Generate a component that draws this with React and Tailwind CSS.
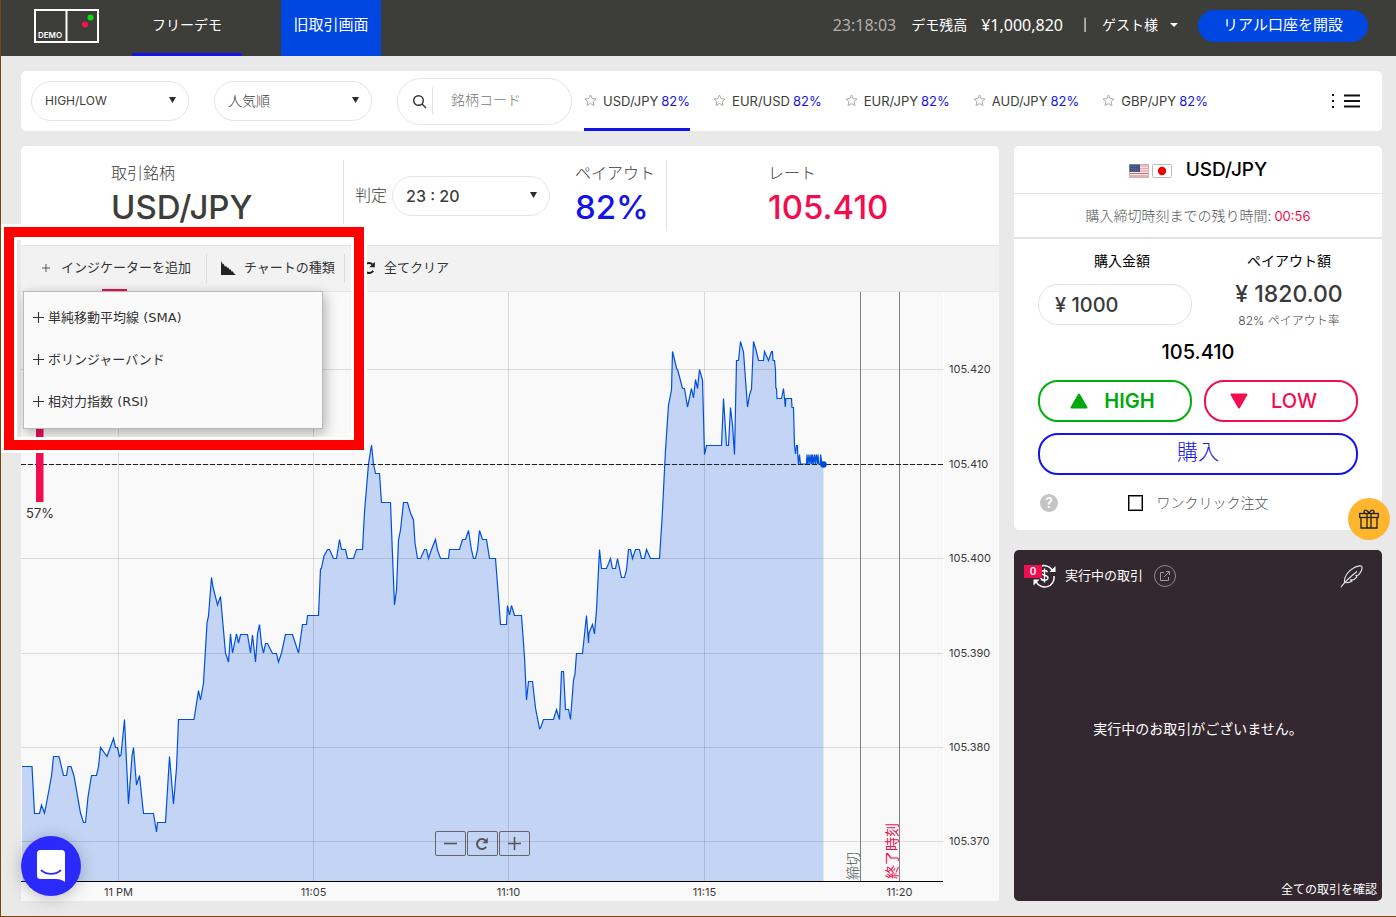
import { useState } from 'react';

const PRICE_POINTS =
  '22,766.5 32,766.5 34.5,813.5 39.5,813.5 41.5,805 44.5,813 46,806 51.5,776 53.5,756.5 59,756.5 63.5,775.5 66.5,775.5 68,766.5 71,766.5 74,776 80.5,813 83.5,822.5 85.5,822.5 88,797 91.5,775.5 96.5,775.5 98.5,767 100.5,747.5 107,756.5 113.5,738.5 115.5,747.5 117.5,747.5 119.5,756.5 121,755 124.5,719.5 128.5,804 132,756 133.5,747.5 136.5,785 139.5,775.5 143.5,813.5 153.5,813.5 156.5,832 157.5,822.5 165.5,822.5 169.5,756.5 173.5,804 176.5,768 178.5,719.5 194,719.5 198.5,690.5 200.5,700 203.5,683 207,623 208.5,616 211.5,577.5 213,587 217.5,605 220.5,596.5 225.5,653 228.5,662 230.5,634 232.5,653 236.5,634 238.5,643 240.5,634.5 247.5,634.5 250.5,653 252.5,635 255.5,662 257.5,634 259.5,624.5 261.5,644 263.5,653 265.5,643.5 267.5,643.5 272.5,653.5 276.5,653.5 278.5,662 281.5,653 285.5,634.5 292.5,634.5 298.5,653 302.5,624.5 306.5,624.5 307.5,615.5 318.5,615.5 320.5,569 321.5,568 324,556 327.5,549.5 329.5,549.5 333.5,558.5 336.5,558.5 339.5,539.5 341.5,549.5 345.5,549.5 347.5,558.5 353.5,558.5 356.5,549.5 362.5,549.5 364.5,512 368.5,464 371.5,445 373.5,464 375.5,473.5 379.5,473.5 381.5,502.5 390.5,502.5 392.5,555 394.5,605 396.5,590 398.5,540 400.5,530 403.5,502.5 407.5,502.5 410.5,513 413.5,520 415,543 417.5,558.5 420.5,558.5 424.5,549.5 426.5,549.5 428.5,558.5 431.5,549.5 435.5,539.5 437.5,550 440.5,558.5 448.5,558.5 449.5,549.5 459.5,549.5 462.5,539.5 465.5,539.5 468.5,530.5 471.5,550 473.5,558.5 475.5,558.5 477.5,550 479.5,530.5 482.5,539.5 486.5,539.5 489.5,558.5 495.5,558.5 498,591 500.5,624.5 506.5,624.5 507.5,605.5 509.5,615 511.5,605.5 514.5,615.5 521.5,615.5 524.5,657 526.5,700 528.5,681.5 532.5,681.5 535.5,708 539.5,728.5 540.5,728 543.5,719.5 553.5,719.5 556.5,709.5 559.5,719.5 561.5,671.5 563.5,671.5 565.5,709.5 568.5,709.5 570.5,719.5 573.5,680 575,674 576.5,653.5 582.5,653.5 586.5,615.5 588.5,643 589,633 592.5,624.5 594.5,634 596.5,610 599.5,549.5 601.5,568.5 606.5,568.5 610.5,558.5 612.5,568.5 615.5,568.5 617.5,558.5 621.5,577.5 624.5,577.5 626.5,570 628.5,549.5 630.5,549.5 632.5,558.5 635.5,549.5 639.5,549.5 641.5,558.5 644.5,558.5 646.5,549.5 650.5,558.5 659.5,558.5 662,520 665.5,450 668.5,405 671.5,390 672.5,351.5 676.5,368 678,371 682.5,388.5 684.5,388.5 687.5,407 691.5,388.5 693.5,398 695.5,379.5 697.5,388.5 699.5,369.5 702.5,380 704.5,454.5 706.5,445.5 721.5,445.5 723.5,398.5 726.5,445.5 728.5,445.5 730.5,407.5 732.5,425 734.5,454.5 736.5,360.5 738.5,360.5 740.5,341.5 743.5,352 747.5,407 749.5,395 751.5,389 753.5,341.5 756,350 758.5,360.5 763.5,360.5 764.5,351.5 768.5,360.5 771.5,351.5 772.5,351.5 773,360.5 774.5,360.5 775.5,370 775.8,388 776.5,388.5 777,398.5 781.5,398.5 783.5,388.5 784.5,398.5 785.3,407 785.8,398.5 791.5,398.5 792,407.5 793.5,407.5 794.5,445.5 795.5,454 796.5,445.5 797.5,445.5 797.7,454 798.5,464 799.5,454.5 800.5,464 806.5,464 807,454.5 808,464 809,454.5 810,464 811,454.5 811.7,464 812.5,454.5 813.3,464 814.5,454.5 815.3,464 816.3,454.5 817.3,464 818,454.5 818.8,464 820.3,464 820.6,454.5 822,464 823.5,464';

const PRICE_LABELS = [
  ['105.420', 369.5],
  ['105.410', 464.5],
  ['105.400', 558.5],
  ['105.390', 653.5],
  ['105.380', 747.5],
  ['105.370', 841.5],
];

const TIME_LABELS = [
  ['11 PM', 118.5],
  ['11:05', 313.5],
  ['11:10', 508.5],
  ['11:15', 704.5],
  ['11:20', 899.5],
];

const PAIRS = ['USD/JPY', 'EUR/USD', 'EUR/JPY', 'AUD/JPY', 'GBP/JPY'];

const INDICATORS = ['単純移動平均線 (SMA)', 'ボリンジャーバンド', '相対力指数 (RSI)'];

function Logo() {
  return (
    <svg width="65" height="34" viewBox="0 0 65 34" role="img" aria-label="DEMO">
      <rect x="1" y="1" width="63" height="32" fill="none" stroke="#fff" strokeWidth="2" />
      <path d="M32.5 0v34" stroke="#fff" strokeWidth="2" />
      <text x="4" y="29" fill="#fff" fontSize="8" fontWeight="600" fontFamily="Inter, sans-serif">DEMO</text>
      <circle cx="56.5" cy="8.5" r="3" fill="#00e400" />
      <circle cx="51" cy="15.5" r="3" fill="#ff0f50" />
    </svg>
  );
}

function Caret({ className }) {
  return (
    <svg className={className} width="7" height="6" viewBox="0 0 7 6" aria-hidden="true">
      <path d="M0 0h7L3.5 6z" fill="currentColor" />
    </svg>
  );
}

function PillSelect({ label, options, className }) {
  return (
    <div className="relative w-[158px] shrink-0">
      <select
        aria-label={label}
        className={`h-10 w-full appearance-none rounded-full border border-[#e4e4e4] bg-white pl-[13px] text-[#3d3e3a] outline-none ${className}`}
      >
        {options.map((o) => (
          <option key={o}>{o}</option>
        ))}
      </select>
      <Caret className="pointer-events-none absolute right-[13px] top-4 text-[#2a2a2a]" />
    </div>
  );
}

function Star() {
  return (
    <svg className="-mt-[3px]" width="13" height="13" viewBox="0 0 13 13" fill="none" stroke="#a8a8a8" strokeLinejoin="round" aria-hidden="true">
      <path d="M6.5 1l1.6 3.6 3.9.4-2.9 2.6.8 3.9-3.4-2-3.4 2 .8-3.9L1 5l3.9-.4z" />
    </svg>
  );
}

function Reload({ size, color }) {
  return (
    <svg width={size} height={size} viewBox="0 0 14 14" fill="none" aria-hidden="true">
      <path d="M11.2 9.8A5 5 0 1 1 10.6 3.6" stroke={color} strokeWidth="2" />
      <path d="M12.8 .8v5.4H7.4z" fill={color} />
    </svg>
  );
}

function Plus({ size }) {
  return (
    <svg width={size} height={size} viewBox="0 0 12 12" fill="none" stroke="currentColor" aria-hidden="true">
      <path d="M6 0v12M0 6h12" strokeWidth="1.2" />
    </svg>
  );
}

function Header() {
  return (
    <header className="flex h-14 items-stretch bg-[#3d3e3a] pl-[33px] pr-7 text-white">
      <a href="#home" className="flex w-[98px] items-center pb-1">
        <Logo />
      </a>
      <nav className="flex">
        <a href="#demo" className="flex w-[110px] justify-center border-b-3 border-[#1414e6] pt-[14px] text-sm leading-[22px]">
          フリーデモ
        </a>
        <a href="#classic" className="ml-[39px] flex w-[100px] justify-center bg-[#0046e0] pt-[14px] text-[15px] leading-[22px]">
          旧取引画面
        </a>
      </nav>
      <div className="ml-auto flex items-start pt-[10px] text-sm leading-[30px]">
        <time className="mr-[15px] font-['Noto_Sans',sans-serif] text-base leading-[30px] text-[#b0b0ae]">23:18:03</time>
        <span>デモ残高</span>
        <span className="ml-[14px] font-['Noto_Sans',sans-serif] text-base leading-[30px]">¥1,000,820</span>
        <span className="ml-[15px] mr-[10px] w-[14px] text-center text-xs leading-[30px]">|</span>
        <button type="button" className="mr-5 flex items-center gap-3">
          ゲスト様
          <svg width="8" height="4" viewBox="0 0 8 4" aria-hidden="true">
            <path d="M0 0h8L4 4z" fill="#fff" />
          </svg>
        </button>
        <button type="button" className="h-8 w-[170px] rounded-full bg-[#0046e0] pb-0.5 text-[15px] leading-[30px]">
          リアル口座を開設
        </button>
      </div>
    </header>
  );
}

function FilterBar() {
  return (
    <section className="flex h-[60px] items-center rounded-[5px] bg-white pl-[10px] pr-[22px]">
      <PillSelect label="取引タイプ" options={['HIGH/LOW']} className="text-xs" />
      <div className="w-[25px] shrink-0" />
      <PillSelect label="並び順" options={['人気順']} className="text-sm font-light" />
      <label className="ml-[25px] flex h-[47px] w-[175px] shrink-0 items-center rounded-full border border-[#e4e4e4] pl-[14px]">
        <svg className="shrink-0" width="15" height="15" viewBox="0 0 15 15" fill="none" stroke="#333" strokeWidth="1.4" aria-hidden="true">
          <circle cx="6.5" cy="6.5" r="4.8" />
          <path d="M10 10l4 4" />
        </svg>
        <span className="ml-[5px] h-7 w-px shrink-0 bg-[#e4e4e4]" />
        <input
          aria-label="銘柄コード"
          placeholder="銘柄コード"
          className="ml-[18px] w-full min-w-0 bg-transparent pb-0.5 pr-4 text-sm font-light outline-none placeholder:text-[#777]"
        />
      </label>
      <div className="ml-3 flex h-full items-stretch gap-[23px]">
        {PAIRS.map((pair, i) => (
          <button
            key={pair}
            type="button"
            className={`flex items-center whitespace-nowrap border-b-3 pt-1 text-[13px] text-[#3d3e3a] ${i === 0 ? 'border-[#1414e6]' : 'border-transparent'}`}
          >
            <Star />
            <span className="ml-[6px] mr-[3px]">{pair}</span>
            <span className="text-[#1414e6]">82%</span>
          </button>
        ))}
      </div>
      <button type="button" aria-label="表示切替" className="ml-auto">
        <svg width="28" height="14" viewBox="0 0 28 14" fill="none" stroke="#111" aria-hidden="true">
          <path d="M1 0v2M1 6v2M1 12v2" strokeWidth="2" />
          <path d="M12 1.5h16M12 7h16M12 12.5h16" strokeWidth="2" />
        </svg>
      </button>
    </section>
  );
}

function Summary() {
  return (
    <div className="flex h-[99px] items-start pt-[14px] text-[#3d3e3a]">
      <div className="h-[70px] w-[323px] border-r border-[#e2e2e2] pl-[90px]">
        <div className="text-base font-light leading-[26px]">取引銘柄</div>
        <div className="text-[33px] font-medium leading-[42px]">USD/JPY</div>
      </div>
      <div className="flex items-center gap-[5px] pl-[11px] pt-4">
        <span className="whitespace-nowrap pb-0.5 text-base font-light">判定</span>
        <PillSelect label="判定時刻" options={['23 : 20']} className="text-base font-medium" />
      </div>
      <div className="h-[70px] w-[117px] border-r border-[#e2e2e2] pl-[25px]">
        <div className="whitespace-nowrap text-base font-light leading-[26px]">ペイアウト</div>
        <div className="text-[33px] font-medium leading-[42px] text-[#1414e6]">82%</div>
      </div>
      <div className="flex-1 pl-[101px]">
        <div className="text-base font-light leading-[26px]">レート</div>
        <div className="text-[33px] font-medium leading-[42px] text-[#f20d4f]">105.410</div>
      </div>
    </div>
  );
}

function Toolbar() {
  return (
    <div className="relative flex h-[47px] items-stretch border-y border-[#e4e4e4] bg-[#f2f2f2] text-[13px] text-[#333]">
      <button type="button" className="relative flex w-[185px] items-center gap-[11px] pb-0.5 pl-[21px]">
        <Plus size="8" />
        <span className="whitespace-nowrap">インジケーターを追加</span>
        <span className="absolute bottom-0 left-[81px] h-0.5 w-[25px] bg-[#f20d4f]" />
      </button>
      <button type="button" className="my-2 flex w-[139px] items-center gap-2 border-x border-[#dcdcdc] pb-0.5 pl-[14px]">
        <svg width="15" height="14" viewBox="0 0 15 14" aria-hidden="true">
          <path d="M0 0l2 3.5.7-1 1.300 3.500 1-1.200 1.300 2.200.9-.8 1.300 2.600.8-.8 1.500 2.700 1-.4 1.200 2.200L15 14H0z" fill="#222" />
        </svg>
        <span className="whitespace-nowrap">チャートの種類</span>
      </button>
      <button type="button" className="flex items-center gap-2 pb-0.5 pl-[17px]">
        <Reload size="14" color="#222" />
        全てクリア
      </button>
      <ul className="absolute left-[2px] top-[45px] z-10 w-[300px] border border-[#b9b9b9] bg-[#fafafa] py-[5px] shadow-[2px_4px_12px_rgba(0,0,0,0.3)]">
        {INDICATORS.map((name) => (
          <li key={name}>
            <button
              type="button"
              className="flex h-[42px] w-full items-center gap-1 pb-px pl-[9px] font-['DejaVu_Sans','Noto_Sans_CJK_JP',sans-serif] text-[13px]"
            >
              <Plus size="11" />
              {name}
            </button>
          </li>
        ))}
      </ul>
      <div className="pointer-events-none absolute -left-[17px] -top-[19px] z-20 h-[223px] w-[360px] border-10 border-[#ff0000] ring-3 ring-white inset-ring-3 inset-ring-white" />
    </div>
  );
}

function Chart() {
  return (
    <div className="relative bg-[#f9f9f9]">
      <svg viewBox="21 292 978 609" className="block w-full" fontFamily="Inter, 'Noto Sans CJK JP', sans-serif" role="img" aria-label="USD/JPY チャート">
        <polygon points={`22,881 ${PRICE_POINTS} 823.5,881`} fill="#c4d4f4" />
        <g stroke="#000" strokeOpacity="0.12">
          {PRICE_LABELS.map(([label, y]) => (
            <path key={label} d={`M21 ${y}H943`} />
          ))}
          {TIME_LABELS.slice(0, 4).map(([label, x]) => (
            <path key={label} d={`M${x} 292V881`} />
          ))}
        </g>
        <path d="M943.5 292V881" stroke="#fff" />
        <path d="M860.5 292V881M899.5 292V881" stroke="#808080" />
        <polyline points={PRICE_POINTS} fill="none" stroke="#0050dc" strokeWidth="1.2" />
        <path d="M21 464.5H943" stroke="#222" strokeWidth="1.2" strokeDasharray="5 2" />
        <circle cx="823.5" cy="464.5" r="3.2" fill="#0046e0" />
        <path d="M21 881.5H943" stroke="#000" />
        <rect x="36" y="320" width="7.5" height="182" fill="#f20d4f" />
        <text x="26" y="518" fontSize="13" fill="#333">57%</text>
        <g fontSize="11" fill="#3a3a3a">
          {PRICE_LABELS.map(([label, y]) => (
            <text key={label} x="949" y={y + 3.5}>{label}</text>
          ))}
          {TIME_LABELS.map(([label, x]) => (
            <text key={label} x={x} y="896" textAnchor="middle">{label}</text>
          ))}
        </g>
        <text transform="translate(858 880) rotate(-90)" fontSize="14" fontWeight="300" fill="#555">締切</text>
        <text transform="translate(897 879) rotate(-90)" fontSize="14" fill="#f20d4f">終了時刻</text>
      </svg>
      <div className="absolute bottom-[45px] left-0 right-14 flex justify-center gap-px text-[#555]">
        <button type="button" aria-label="縮小" className="flex h-[25px] w-[31px] items-center justify-center rounded-xs border border-[#666]">
          <svg width="13" height="13" viewBox="0 0 13 13" stroke="currentColor" strokeWidth="1.6" aria-hidden="true"><path d="M0 6.5h13" /></svg>
        </button>
        <button type="button" aria-label="リセット" className="flex h-[25px] w-[31px] items-center justify-center rounded-xs border border-[#666]">
          <Reload size="14" color="#555" />
        </button>
        <button type="button" aria-label="拡大" className="flex h-[25px] w-[31px] items-center justify-center rounded-xs border border-[#666]">
          <svg width="13" height="13" viewBox="0 0 13 13" stroke="currentColor" strokeWidth="1.6" aria-hidden="true"><path d="M0 6.5h13M6.5 0v13" /></svg>
        </button>
      </div>
    </div>
  );
}

function Flags() {
  return (
    <span className="flex gap-[3px]">
      <svg width="20" height="14" viewBox="0 0 20 14" aria-hidden="true">
        <rect x=".5" y=".5" width="19" height="13" fill="#fff" stroke="#c9b4b8" />
        <path d="M1 2h18M1 4.5h18M1 7h18" stroke="#f0a0a6" strokeWidth="1.4" />
        <path d="M1 9.5h18M1 12h18" stroke="#e8555f" strokeWidth="1.2" />
        <rect x=".5" y=".5" width="10.5" height="7.5" fill="#3c5080" />
        <path d="M2 2.5h8M2 4.5h8M2 6.5h8" stroke="#6d83ac" strokeWidth=".8" strokeDasharray="1 1" />
      </svg>
      <svg width="20" height="14" viewBox="0 0 20 14" aria-hidden="true">
        <rect x=".5" y=".5" width="19" height="13" rx="1" fill="#fff" stroke="#bbb" />
        <circle cx="10" cy="7" r="4.2" fill="#f00000" />
      </svg>
    </span>
  );
}

function OrderPanel({ amount, setAmount }) {
  return (
    <section className="rounded-[5px] bg-white">
      <h2 className="flex h-12 items-center justify-center gap-[14px] border-b border-[#e2e2e2] pt-0.5 text-[19px] font-medium text-black">
        <Flags />
        USD/JPY
      </h2>
      <p className="flex h-[45px] items-center justify-center gap-[3px] border-b-2 border-[#e2e2e2] text-sm font-light text-[#555]">
        購入締切時刻までの残り時間:
        <span className="pt-0.5 text-[13px] font-normal text-[#f20d4f]">00:56</span>
      </p>
      <div className="grid grid-cols-2 gap-3 px-6 pt-3 text-center">
        <div>
          <label htmlFor="amount" className="mr-[-14px] block text-sm leading-5">購入金額</label>
          <input
            id="amount"
            value={amount}
            onChange={(e) => setAmount(e.target.value)}
            className="mt-[13px] h-[41px] w-full rounded-[20px] border border-[#e2e2e2] bg-white pl-4 text-xl font-medium text-[#3a3a3a] outline-none"
          />
        </div>
        <div className="pl-4">
          <div className="text-sm leading-5">ペイアウト額</div>
          <div className="mt-2 text-[23px] font-medium leading-[30px] text-[#3a3a3a]">¥ 1820.00</div>
          <div className="mt-1 text-xs font-light leading-4 text-[#444]">82% ペイアウト率</div>
        </div>
      </div>
      <div className="mt-[11px] text-center text-xl font-medium leading-6 text-black">105.410</div>
      <div className="mt-4 grid grid-cols-2 gap-x-3 gap-y-[11px] px-6">
        <button type="button" className="flex h-[42px] items-center justify-center gap-4 rounded-[20px] border-2 border-[#00b00c] pr-[5px] text-xl font-semibold text-[#00a80b]">
          <svg width="18" height="16" viewBox="0 0 18 16" aria-hidden="true">
            <path d="M9 1.5L16.5 14.5h-15z" fill="#00a80b" stroke="#00a80b" strokeWidth="2" strokeLinejoin="round" />
          </svg>
          HIGH
        </button>
        <button type="button" className="flex h-[42px] items-center justify-center gap-[23px] rounded-[20px] border-2 border-[#f20d4f] pr-[15px] text-xl font-medium text-[#f20d4f]">
          <svg width="18" height="16" viewBox="0 0 18 16" aria-hidden="true">
            <path d="M9 14.5L16.5 1.5h-15z" fill="#f20d4f" stroke="#f20d4f" strokeWidth="2" strokeLinejoin="round" />
          </svg>
          LOW
        </button>
        <button type="button" className="col-span-2 h-[42px] rounded-[20px] border-2 border-[#1414e6] pb-1 text-[21px] font-light text-[#1414e6]">
          購入
        </button>
      </div>
      <div className="flex items-center px-[26px] pb-[17px] pt-[18px]">
        <button type="button" aria-label="ヘルプ" className="size-[18px] rounded-full bg-[#c4c4c4] text-sm font-semibold leading-[18px] text-white">?</button>
        <label className="flex flex-1 items-center justify-center gap-[14px] pr-[18px] text-sm font-light leading-5 text-[#555]">
          <input type="checkbox" className="h-4 w-[15px] appearance-none border border-black bg-white inset-ring inset-ring-[#888]" />
          ワンクリック注文
        </label>
      </div>
    </section>
  );
}

function OpenTrades() {
  return (
    <section className="flex flex-1 flex-col rounded-[5px] bg-[#332830] text-white">
      <div className="flex h-[52px] items-center pl-[10px] pr-[19px]">
        <div className="relative h-[26px] w-8">
          <svg className="absolute bottom-px right-0" width="24" height="25" viewBox="0 0 24 25" fill="none" stroke="#fff" aria-hidden="true">
            <path d="M5 5.5A9.5 9.5 0 0 1 20.5 8M22 13A9.5 9.5 0 0 1 4 18.5" strokeWidth="1.5" />
            <path d="M23.5 3v6h-6zM1.5 22.5v-6h6z" fill="#fff" stroke="none" />
            <path d="M15.5 9.2C15 7.8 13.5 7.3 12 7.5c-1.800.2-3 1.200-2.900 2.500.2 3 6.700 1.400 6.900 4.700.1 1.500-1.400 2.500-3.200 2.600-2 .1-3.500-.7-3.900-2.300M12.500 5.500v14" strokeWidth="1.4" />
          </svg>
          <span className="absolute left-0 top-[2px] h-[13px] w-[18px] bg-[#f20d4f] text-center text-[10px] font-semibold leading-[13px]">0</span>
        </div>
        <h2 className="ml-[9px] text-[13px]">実行中の取引</h2>
        <button type="button" aria-label="別ウィンドウで開く" className="ml-[11px] flex size-[22px] items-center justify-center rounded-full border border-[#908a8e]">
          <svg width="10" height="10" viewBox="0 0 10 10" fill="none" stroke="#a09a9e" aria-hidden="true">
            <path d="M4 1.5H.5v8h8V6M4 6l5-5M6 .5h3.5V4" />
          </svg>
        </button>
        <button type="button" aria-label="クイック注文" className="ml-auto">
          <svg width="23" height="23" viewBox="0 0 23 23" fill="none" stroke="#e4e4e4" strokeWidth="1.1" strokeLinejoin="round" aria-hidden="true">
            <path d="M.8 22.3C5 16.5 10 12 17 6.5" />
            <path d="M4.5 17.5C4 10 11 2.5 19.5.9c1.800-.3 2.800.6 2.600 2.200-.3 2.500-1.600 4.900-3.600 6.900l-2.700.6 1.100 1.200c-1 1.100-2.200 2.200-3.400 3.100l-3-.1 1.400 1.400c-1.800 1-3.900 1.500-6.400 1.600" />
          </svg>
        </button>
      </div>
      <p className="flex flex-1 justify-center pt-[117px] text-sm">実行中のお取引がございません。</p>
      <a href="#all" className="self-end pb-[3px] pr-[5px] text-xs leading-4">全ての取引を確認</a>
    </section>
  );
}

export default function App() {
  const [amount, setAmount] = useState('¥ 1000');
  return (
    <div className="relative min-h-screen border-b border-l border-[#7c4408] bg-[#e9e9e9] font-['Inter','Noto_Sans_CJK_JP',sans-serif]">
      <Header />
      <main className="flex flex-col gap-[15px] pb-[15px] pl-5 pr-[14px] pt-[15px]">
        <FilterBar />
        <div className="flex gap-[15px]">
          <section className="min-w-0 flex-1 overflow-visible rounded-[5px] bg-white">
            <Summary />
            <Toolbar />
            <Chart />
          </section>
          <aside className="flex w-[368px] shrink-0 flex-col gap-5">
            <OrderPanel amount={amount} setAmount={setAmount} />
            <OpenTrades />
          </aside>
        </div>
      </main>
      <button type="button" aria-label="特典" className="absolute right-[6px] top-[498px] flex size-[42px] items-center justify-center rounded-full bg-[#ffb52e]">
        <svg width="20" height="20" viewBox="0 0 20 20" fill="none" stroke="#222" strokeWidth="1.3" aria-hidden="true">
          <rect x=".7" y="4.5" width="18.6" height="4" />
          <path d="M2 8.5V19h16V8.5M8 4.5V19M12 4.5V19M10 4.5C9 1 5.5.2 5 2.5c-.2 1.200.8 2 1.500 2M10 4.500C11 1 14.500.2 15 2.500c.2 1.200-.8 2-1.500 2" />
        </svg>
      </button>
      <button type="button" aria-label="チャット" className="absolute bottom-5 left-5 flex size-[60px] items-center justify-center rounded-full bg-[#2a2aff] shadow-[0_2px_16px_rgba(0,0,0,0.25)]">
        <svg width="28" height="32" viewBox="0 0 28 32" aria-hidden="true">
          <path d="M3.5 0h21A3.5 3.5 0 0 1 28 3.5V32c-2.500-1.800-5.500-3-8.500-3h-16A3.500 3.500 0 0 1 0 25.500v-22A3.500 3.500 0 0 1 3.500 0z" fill="#fff" />
          <path d="M4.5 20.5c5.500 4.500 13.500 4.500 19 0" fill="none" stroke="#2a2aff" strokeWidth="1.8" strokeLinecap="round" />
        </svg>
      </button>
    </div>
  );
}
